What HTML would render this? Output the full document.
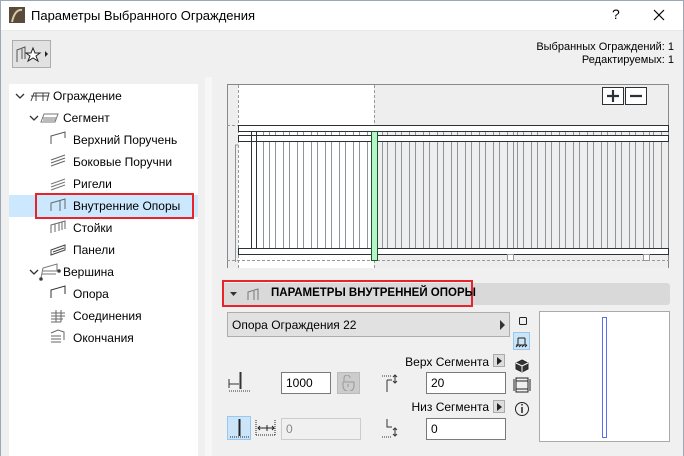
<!DOCTYPE html>
<html><head><meta charset="utf-8"><style>
*{margin:0;padding:0;box-sizing:border-box}
body{width:684px;height:456px;overflow:hidden;background:#f0f0f0;font-family:"Liberation Sans","DejaVu Sans",sans-serif;font-size:12px;color:#000;position:relative}
.a{position:absolute}
.t{position:absolute;white-space:nowrap}
.inp{position:absolute;background:#fff;border:1px solid #7a7a7a;padding:3px 4px;font-size:12px}
</style></head><body>
<div class="a" style="left:0;top:0;width:684px;height:31px;background:#fff;border-bottom:1px solid #e8e8e8"></div>
<div class="a" style="left:0;top:0;width:684px;height:456px;border:1px solid #9aa8b8;border-bottom:none"></div>
<svg class="a" style="left:9px;top:7px" width="16" height="16"><rect width="16" height="16" fill="#5a4a3a"/><path d="M3 15 Q6 2 13 3" stroke="#d8c8a8" stroke-width="2" fill="none"/></svg>
<div class="t" style="left:31px;top:8px;font-size:13px">Параметры Выбранного Ограждения</div>
<div class="t" style="left:612px;top:6px;font-size:14px">?</div>
<svg class="a" style="left:653px;top:9px" width="12" height="12"><path d="M1 1L11 11M11 1L1 11" stroke="#000" stroke-width="1.2"/></svg>
<div class="t" style="right:10px;top:41px;font-size:11px;text-align:right;line-height:13px">Выбранных Ограждений: 1<br>Редактируемых: 1</div>
<div class="a" style="left:12px;top:40px;width:39px;height:28px;border:1px solid #adadad;background:#e1e1e1"></div>
<svg class="a" style="left:14px;top:43px" width="36" height="22"><path d="M3 19V7l8-3v12M8 6v10" stroke="#555" fill="none"/><path d="M19 5l2 5 5 0-4 3 2 5-5-3-5 3 2-5-4-3 5 0z" fill="#fff" stroke="#222"/><path d="M31 8l3 3-3 3z" fill="#222"/></svg>
<div class="a" style="left:9px;top:84px;width:189px;height:372px;background:#fff"></div>
<div class="a" style="left:205px;top:77px;width:7px;height:379px;background:#f7f7f7"></div>
<div class="a" style="left:9px;top:195px;width:189px;height:22px;background:#cce8ff"></div>
<div class="a" style="left:35px;top:193px;width:159px;height:26px;border:2px solid #e8242a"></div>
<svg class="a" style="left:0;top:84px" width="198" height="270" fill="none" stroke="#444" stroke-width="1">
<path d="M16 10l4 4 4-4M30 32l4 4 4-4M30 186l4 4 4-4" stroke="#333" stroke-width="1.3"/>
<path d="M31 17l3-8h15l-2 8M31 12h18M36 9v8M43 9v8"/>
<path d="M41 38l3-8h14l-3 8zM42 34h14M43 36h13" stroke="#777"/>
<path d="M51 60v-8l14-4v6" stroke="#555"/>
<path d="M51 82l14-5M51 79l14-5M51 76l14-5" stroke="#666"/>
<path d="M51 103l14-5M51 100l14-5M51 106l14-5" stroke="#777"/>
<path d="M51 127v-8l14-4v10M60 117v10" stroke="#666"/>
<path d="M51 149v-8l14-4v8M55 140v8M59 139v8M62 138v8" stroke="#666"/>
<path d="M51 171v-5l14-5v5zM53 168l11-4" stroke="#444"/>
<path d="M41 194l2-10 14-4v7M42 190h14M43 187h14" stroke="#777"/><circle cx="41" cy="195" r="1.3" fill="#333"/><circle cx="59" cy="187" r="1.3" fill="#333"/>
<path d="M51 214v-8l14-4v8" stroke="#333"/>
<path d="M51 229h14M51 232h14M51 235h12M51 238h10M56 226v12M61 226v12" stroke="#666"/>
<path d="M51 249l7-3 6 2v8M51 252h10M51 255h10M51 258h10" stroke="#666"/>
</svg>
<div class="t" style="left:53px;top:89px">Ограждение</div>
<div class="t" style="left:63px;top:111px">Сегмент</div>
<div class="t" style="left:73px;top:133px">Верхний Поручень</div>
<div class="t" style="left:73px;top:155px">Боковые Поручни</div>
<div class="t" style="left:73px;top:177px">Ригели</div>
<div class="t" style="left:73px;top:199px">Внутренние Опоры</div>
<div class="t" style="left:73px;top:221px">Стойки</div>
<div class="t" style="left:73px;top:243px">Панели</div>
<div class="t" style="left:63px;top:265px">Вершина</div>
<div class="t" style="left:73px;top:287px">Опора</div>
<div class="t" style="left:73px;top:309px">Соединения</div>
<div class="t" style="left:73px;top:331px">Окончания</div>
<!-- preview -->
<div class="a" style="left:227px;top:84px;width:442px;height:184px;background:#eeeeee;border:1px solid #888;border-bottom:none"></div>
<div class="a" style="left:238px;top:85px;width:136px;height:183px;background:#fff"></div>
<svg class="a" style="left:227px;top:84px" width="442" height="184">
<g stroke="#999" stroke-dasharray="3,2" fill="none"><path d="M11.5 1v183M147.5 1v183M0 41.5h11M0 176.5h442"/></g>
<path d="M8.5 178V61h3" stroke="#8e959a" fill="none"/>
<g stroke="#8e959a">
<path d="M36.5 47v117M42.5 47v117M48.5 47v117M56.5 47v117M62.5 47v117M70.5 47v117M76.5 47v117M84.5 47v117M90.5 47v117M98.5 47v117M104.5 47v117M112.5 47v117M118.5 47v117M126.5 47v117M132.5 47v117M140.5 47v117M155.5 47v117M160.5 47v117M168.5 47v117M174.5 47v117M182.5 47v117M188.5 47v117M196.5 47v117M202.5 47v117M210.5 47v117M216.5 47v117M224.5 47v117M230.5 47v117M238.5 47v117M244.5 47v117M252.5 47v117M258.5 47v117M266.5 47v117M272.5 47v117M290.5 47v117M296.5 47v117M304.5 47v117M310.5 47v117M318.5 47v117M324.5 47v117M332.5 47v117M338.5 47v117M346.5 47v117M352.5 47v117M360.5 47v117M366.5 47v117M374.5 47v117M380.5 47v117M388.5 47v117M394.5 47v117M402.5 47v117M408.5 47v117M426.5 47v117M434.5 47v117"/>
<path d="M280.5 47v118M286.5 47v118M416.5 47v118M422.5 47v118"/></g>
<g fill="#fff" stroke="#2a3236"><rect x="11.5" y="41.5" width="430" height="6"/><rect x="11.5" y="51.5" width="430" height="6"/><rect x="11.5" y="164.5" width="430" height="6"/></g>
<path d="M24.5 47v117M29.5 47v117" stroke="#2a3236"/>
<rect x="280.5" y="170.5" width="6" height="6" fill="#fff" stroke="#999"/><rect x="416.5" y="170.5" width="6" height="6" fill="#fff" stroke="#999"/>
<rect x="144.5" y="47.5" width="6" height="129" fill="#b6f5c8" stroke="#1a5a2a"/>
<g fill="#fff" stroke="#2a3236"><rect x="375.5" y="3.5" width="21" height="17"/><rect x="398.5" y="3.5" width="21" height="17"/></g>
<path d="M380 12h12M386 6v12M403 12h12" stroke="#2a3236" stroke-width="2.2"/>
</svg>
<!-- section header -->
<div class="a" style="left:222px;top:283px;width:448px;height:22px;background:#d9d9d9;border-radius:3px"></div>
<div class="a" style="left:222px;top:280px;width:251px;height:27px;border:2px solid #e8242a"></div>
<svg class="a" style="left:230px;top:288px" width="30" height="14"><path d="M0 4h7l-3.5 4z" fill="#333"/><path d="M18 12V4l10-3v11M24 3v9" stroke="#777" fill="none"/></svg>
<div class="t" style="left:271px;top:287px;font-weight:bold;font-size:11.5px">ПАРАМЕТРЫ ВНУТРЕННЕЙ ОПОРЫ</div>
<div class="a" style="left:227px;top:312px;width:283px;height:25px;background:#e1e1e1;border:1px solid #adadad"></div>
<div class="t" style="left:232px;top:318px">Опора Ограждения 22</div>
<svg class="a" style="left:500px;top:320px" width="6" height="10"><path d="M0 0l5 5-5 5z" fill="#333"/></svg>
<!-- right icons -->
<svg class="a" style="left:513px;top:313px" width="20" height="105" fill="none" stroke="#222">
<rect x="6.5" y="4.5" width="7" height="7" rx="1"/>
<rect x="0.5" y="19.5" width="16" height="17" fill="#cce4f7" stroke="#99c8ef"/>
<path d="M5 25v7M12 25v7M5 25h7M3 32h11M3 34l2-2M6 34l2-2M9 34l2-2M12 34l2-2"/>
<path d="M9 47l6 3v6l-6 3-6-3v-6z" fill="#333"/><path d="M3 50l6 3 6-3M9 53v6" stroke="#fff"/>
<path d="M3 65h12v14H3zM3 68h12M3 76h12M1 66v12M17 66v12"/>
<circle cx="9" cy="96" r="6.5"/><path d="M9 94v6M9 91v1.5" stroke-width="1.5"/>
</svg>
<div class="a" style="left:539px;top:311px;width:131px;height:131px;background:#fff;border:1px solid #aaa"></div>
<div class="a" style="left:602px;top:317px;width:5px;height:121px;border:1px solid #5b6ef0;background:#fff"></div>
<!-- fields -->
<svg class="a" style="left:228px;top:371px" width="24" height="22" fill="none" stroke="#333"><path d="M1 20h22" stroke-dasharray="1,1"/><path d="M1 8v9M1 13h10"/><path d="M12 1v17M13 1v17"/></svg>
<div class="inp" style="left:281px;top:372px;width:50px;height:22px">1000</div>
<div class="a" style="left:337px;top:372px;width:23px;height:22px;background:#ccc;border:1px solid #bbb"></div>
<svg class="a" style="left:341px;top:375px" width="15" height="16" fill="none" stroke="#999"><path d="M3 6V3a3 3 0 016 0M2 7h11v4a5 5 0 01-11 0zM7 9v3"/></svg>
<svg class="a" style="left:380px;top:373px" width="20" height="20" fill="none" stroke="#333"><path d="M2 3h10" stroke-dasharray="1,1"/><path d="M7 7h5M7 7v12M15 2v8M13 4l2-2 2 2M13 8l2 2 2-2"/></svg>
<div class="t" style="right:195px;top:355px">Верх Сегмента</div>
<div class="a" style="left:493px;top:354px;width:12px;height:13px;background:#ddd;border:1px solid #aaa"></div>
<svg class="a" style="left:497px;top:357px" width="6" height="8"><path d="M0 0l5 4-5 4z" fill="#222"/></svg>
<div class="inp" style="left:426px;top:372px;width:80px;height:22px">20</div>
<div class="t" style="right:195px;top:400px">Низ Сегмента</div>
<div class="a" style="left:493px;top:400px;width:12px;height:13px;background:#ddd;border:1px solid #aaa"></div>
<svg class="a" style="left:497px;top:403px" width="6" height="8"><path d="M0 0l5 4-5 4z" fill="#222"/></svg>
<div class="a" style="left:227px;top:416px;width:24px;height:24px;background:#cce4f7;border:1px solid #99c8ef"></div>
<svg class="a" style="left:227px;top:416px" width="52" height="24" fill="none" stroke="#222"><path d="M12.5 3v17" stroke-width="2"/><path d="M3 21h19M29 19h20M29 4v16M48 4v16" stroke-dasharray="1,1"/><path d="M31 12h16M33 10l-2 2 2 2M45 10l2 2-2 2M40 9v6"/></svg>
<div class="a" style="left:281px;top:418px;width:80px;height:22px;border:1px solid #ccc;background:#f0f0f0;color:#888;padding:3px 4px">0</div>
<svg class="a" style="left:380px;top:417px" width="20" height="22" fill="none" stroke="#333"><path d="M7 2v8h5M15 11v8M13 13l2-2 2 2M13 17l2 2 2-2"/><path d="M2 20h10" stroke-dasharray="1,1"/></svg>
<div class="inp" style="left:426px;top:418px;width:80px;height:22px">0</div>
</body></html>
